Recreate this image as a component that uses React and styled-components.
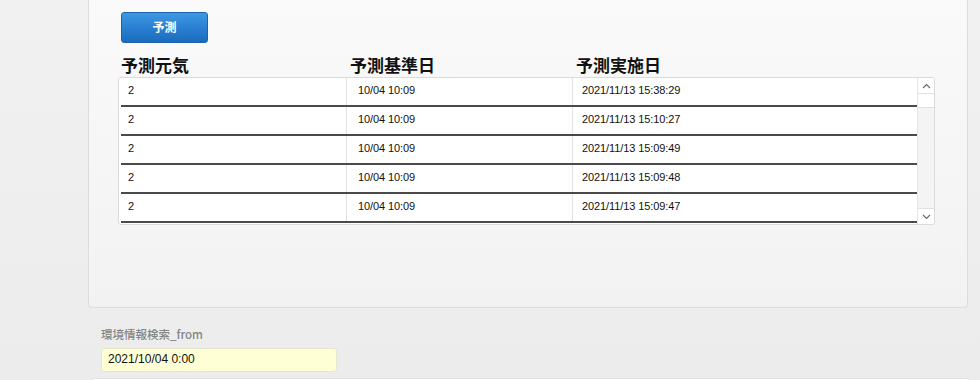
import React from "react";
import styled, { createGlobalStyle } from "styled-components";

const GlobalStyle = createGlobalStyle`
  body {
    margin: 0;
    background: linear-gradient(180deg, #f1f1f1 0%, #ececec 100%);
    font-family: "Liberation Sans", "Noto Sans CJK JP", sans-serif;
    color: #111;
  }
`;

const Page = styled.div`
  width: 980px;
  height: 380px;
  overflow: hidden;
  padding-left: 88px;
  box-sizing: border-box;
`;

const Panel = styled.div`
  width: 880px;
  height: 308px;
  box-sizing: border-box;
  border: 1px solid #dcdcdc;
  border-top: none;
  border-radius: 0 0 4px 4px;
  background: linear-gradient(180deg, #fafafa 0%, #f2f2f2 100%);
  padding: 12px 0 0 29px;
`;

const Button = styled.button`
  display: flex;
  align-items: center;
  justify-content: center;
  width: 87px;
  height: 31px;
  margin-left: 3px;
  border: 1px solid #1d62ab;
  border-radius: 3px;
  background: linear-gradient(180deg, #3d98e2 0%, #2a80d2 50%, #1b6bbd 100%);
  color: #fff;
  font-family: "Noto Sans CJK JP", sans-serif;
  font-size: 12px;
  font-weight: 700;
  padding: 0 0 2px;
`;

const Grid = styled.div`
  display: grid;
  grid-template-columns: 227px 226px 1fr;
`;

const HeadRow = styled(Grid)`
  width: 800px;
  height: 34px;
  align-items: end;
`;

const Head = styled.div`
  font-family: "Noto Sans CJK JP", sans-serif;
  font-size: 17px;
  font-weight: 700;
  line-height: 20px;
  padding-left: ${(p) => p.$pad}px;
  padding-bottom: 2px;
`;

const Table = styled.div`
  display: flex;
  width: 817px;
  height: 148px;
  box-sizing: border-box;
  border: 1px solid #dadada;
  border-radius: 3px;
  background: #fff;
  overflow: hidden;
`;

const Rows = styled.div`
  flex: 1;
  padding-left: 2px;
`;

const Row = styled(Grid)`
  height: 27px;
  border-bottom: 2px solid #4a4a4a;
  grid-template-columns: 225px 226px 1fr;
`;

const Cell = styled.div`
  display: flex;
  align-items: center;
  padding-left: ${(p) => p.$pad}px;
  font-size: 11px;
  letter-spacing: -0.1px;
  color: #111;
  border-left: ${(p) => (p.$sep ? "1px solid #e2e2e2" : "none")};
  padding-bottom: 3px;
`;

const Scroll = styled.div`
  width: 16px;
  display: flex;
  flex-direction: column;
  background: #f4f4f4;
  border-left: 1px solid #e4e4e4;
`;

const ArrowBox = styled.div`
  height: 15px;
  display: flex;
  align-items: center;
  justify-content: center;
  background: #fff;
  border-bottom: ${(p) => (p.$top ? "1px solid #e0e0e0" : "none")};
  border-top: ${(p) => (p.$top ? "none" : "1px solid #e0e0e0")};
`;

const Thumb = styled.div`
  height: 13px;
  background: #fff;
  border-bottom: 1px solid #e0e0e0;
`;

const Track = styled.div`
  flex: 1;
`;

const Search = styled.div`
  padding: 19px 0 0 13px;
`;

const Label = styled.div`
  font-family: "Noto Sans CJK JP", sans-serif;
  font-size: 11.5px;
  font-weight: 500;
  color: #858585;
  line-height: 14px;
  margin-bottom: 7px;
`;

const Input = styled.div`
  width: 236px;
  height: 24px;
  box-sizing: border-box;
  background: #ffffd6;
  border: 1px solid #e6e6cf;
  border-radius: 3px;
  font-size: 12px;
  padding: 0 0 2px 6px;
  display: flex;
  align-items: center;
`;

const NextPanel = styled.div`
  margin: 6px 0 0 3px;
  width: 877px;
  height: 20px;
  background: #fff;
  border: 1px solid #e0e0e0;
  border-radius: 3px 3px 0 0;
`;

const Chevron = ({ up }) => (
  <svg width="9" height="6" viewBox="0 0 9 6">
    <path
      d={up ? "M1 5 L4.5 1.5 L8 5" : "M1 1 L4.5 4.5 L8 1"}
      fill="none"
      stroke="#666"
      strokeWidth="1.1"
    />
  </svg>
);

const rows = [
  ["2", "10/04 10:09", "2021/11/13 15:38:29"],
  ["2", "10/04 10:09", "2021/11/13 15:10:27"],
  ["2", "10/04 10:09", "2021/11/13 15:09:49"],
  ["2", "10/04 10:09", "2021/11/13 15:09:48"],
  ["2", "10/04 10:09", "2021/11/13 15:09:47"],
];

export default function App() {
  return (
    <>
      <GlobalStyle />
      <Page>
        <Panel>
          <Button>予測</Button>
          <HeadRow>
            <Head $pad={3}>予測元気</Head>
            <Head $pad={5}>予測基準日</Head>
            <Head $pad={5}>予測実施日</Head>
          </HeadRow>
          <Table>
            <Rows>
              {rows.map((r, i) => (
                <Row key={i}>
                  <Cell $pad={7}>{r[0]}</Cell>
                  <Cell $pad={11} $sep>{r[1]}</Cell>
                  <Cell $pad={9} $sep>{r[2]}</Cell>
                </Row>
              ))}
            </Rows>
            <Scroll>
              <ArrowBox $top>
                <Chevron up />
              </ArrowBox>
              <Thumb />
              <Track />
              <ArrowBox>
                <Chevron />
              </ArrowBox>
            </Scroll>
          </Table>
        </Panel>
        <Search>
          <Label>環境情報検索_from</Label>
          <Input>2021/10/04 0:00</Input>
        </Search>
        <NextPanel />
      </Page>
    </>
  );
}
